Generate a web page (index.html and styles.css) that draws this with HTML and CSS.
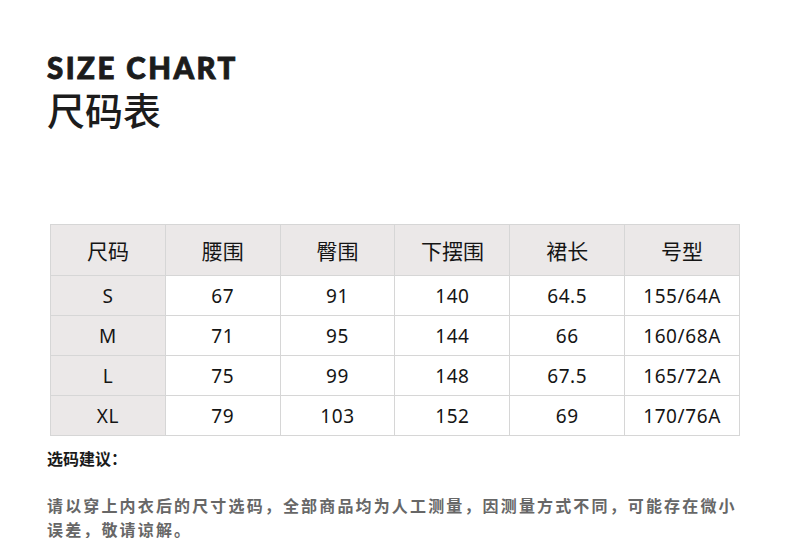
FILE: index.html
```html
<!DOCTYPE html>
<html lang="zh">
<head>
<meta charset="utf-8">
<link rel="stylesheet" href="styles.css">
</head>
<body>
<div class="page">
  <header class="head">
    <div class="title-en">SIZE CHART</div>
    <div class="title-cn">尺码表</div>
  </header>
  <table class="chart">
    <thead>
      <tr><th>尺码</th><th>腰围</th><th>臀围</th><th>下摆围</th><th>裙长</th><th>号型</th></tr>
    </thead>
    <tbody>
      <tr><td class="sz">S</td><td>67</td><td>91</td><td>140</td><td>64.5</td><td>155/64A</td></tr>
      <tr><td class="sz">M</td><td>71</td><td>95</td><td>144</td><td>66</td><td>160/68A</td></tr>
      <tr><td class="sz">L</td><td>75</td><td>99</td><td>148</td><td>67.5</td><td>165/72A</td></tr>
      <tr><td class="sz">XL</td><td>79</td><td>103</td><td>152</td><td>69</td><td>170/76A</td></tr>
    </tbody>
  </table>
  <div class="tip-title">选码建议：</div>
  <p class="tip">请以穿上内衣后的尺寸选码，全部商品均为人工测量，因测量方式不同，可能存在微小误差，敬请谅解。</p>
</div>
</body>
</html>
```
FILE: styles.css
```css
html, body { margin: 0; padding: 0; background: #fff; }
body { width: 790px; height: 538px; overflow: hidden; font-family: "Noto Sans", "Noto Sans CJK SC", sans-serif; color: #1a1a1a; }
.page { padding: 51px 0 0 47px; }
.head { display: flex; flex-direction: column; }
.title-en { font-family: "Lato", sans-serif; font-weight: 900; font-size: 29.4px; letter-spacing: 2.5px; line-height: 34px; color: #1c1c1c; -webkit-text-stroke: 0.9px #1c1c1c; }
.title-cn { font-family: "Noto Sans CJK SC", sans-serif; font-size: 38px; line-height: 48px; font-weight: 500; color: #1c1c1c; }
.chart { border-collapse: collapse; margin: 91px 0 0 3px; table-layout: fixed; width: 690px; }
.chart th, .chart td { border: 1px solid #d6d6d6; text-align: center; padding: 0; font-family: "Noto Sans", "Noto Sans CJK SC", sans-serif; color: #151515; }
.chart th { height: 50px; background: #ebe8e8; font-weight: 400; font-size: 21px; font-family: "Noto Sans CJK SC", sans-serif; }
.chart td { height: 39px; font-size: 19px; letter-spacing: 0.6px; }
.chart td.sz { background: #ebe8e8; }
.tip-title { font-family: "Noto Sans CJK SC", sans-serif; font-weight: 700; font-size: 16px; line-height: 20px; margin-top: 12px; color: #1a1a1a; }
.tip { font-family: "Noto Sans CJK SC", sans-serif; font-weight: 700; font-size: 16px; letter-spacing: 2.15px; line-height: 24px; color: #676767; margin: 25px 0 0; width: 700px; }
```
